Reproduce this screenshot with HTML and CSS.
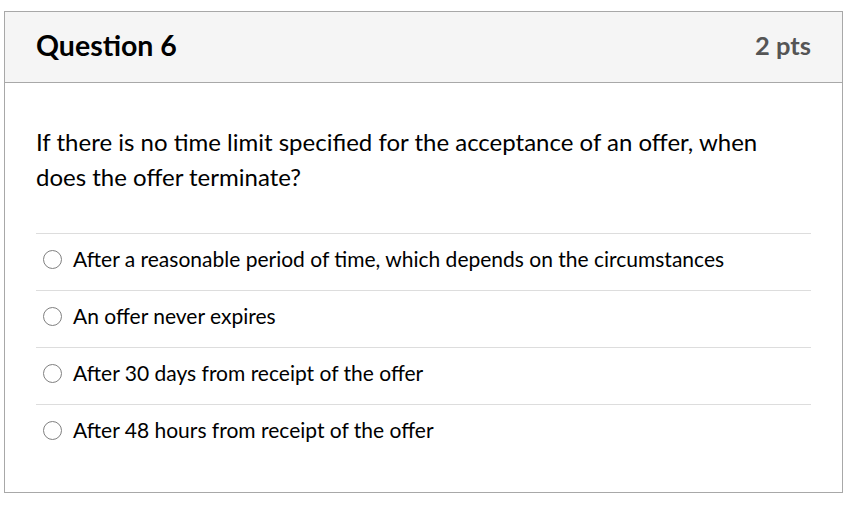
FILE: index.html
```html
<!DOCTYPE html>
<html>
<head>
<meta charset="utf-8">
<link rel="stylesheet" href="styles.css">
</head>
<body>
<div class="card">
  <div class="header">
    <h2 class="title">Question 6</h2>
    <div class="pts">2 pts</div>
  </div>
  <div class="body">
    <p class="question">If there is no time limit specified for the acceptance of an offer, when does the offer terminate?</p>
    <div class="answers">
      <label class="answer"><span class="radio"></span><span>After a reasonable period of time, which depends on the circumstances</span></label>
      <label class="answer"><span class="radio"></span><span>An offer never expires</span></label>
      <label class="answer"><span class="radio"></span><span>After 30 days from receipt of the offer</span></label>
      <label class="answer"><span class="radio"></span><span>After 48 hours from receipt of the offer</span></label>
    </div>
  </div>
</div>
</body>
</html>
```
FILE: styles.css
```css
html, body { margin: 0; padding: 0; background: #fff; }
body { font-family: Lato, "Open Sans", sans-serif; color: #2d3b45; }
.card {
  margin: 11px 4px 0 4px;
  width: 839px;
  height: 482px;
  border: 1px solid #a8a8a8;
  box-sizing: border-box;
  display: flex;
  flex-direction: column;
}
.header {
  background: #f5f5f5;
  border-bottom: 1px solid #a8a8a8;
  height: 71px;
  box-sizing: border-box;
  display: flex;
  align-items: center;
  justify-content: space-between;
  padding: 0 31px 5px 31px;
}
.title { margin: 0; font-size: 28.5px; font-weight: 700; color: #000; }
.pts { font-size: 25.5px; font-weight: 700; color: #555; }
.body { padding: 41px 31px 0 31px; }
.question { margin: 0; font-size: 24px; line-height: 35px; color: #000; }
.answers { margin-top: 39px; }
.answer {
  display: flex;
  align-items: center;
  height: 57px;
  padding-bottom: 8px;
  border-top: 1px solid #ddd;
  box-sizing: border-box;
  font-size: 21px;
  color: #000;
}
.radio {
  width: 19px; height: 19px;
  border: 1.5px solid #808080;
  border-radius: 50%;
  box-sizing: border-box;
  margin: 3px 11px 0 7px;
  flex: none;
}
```
